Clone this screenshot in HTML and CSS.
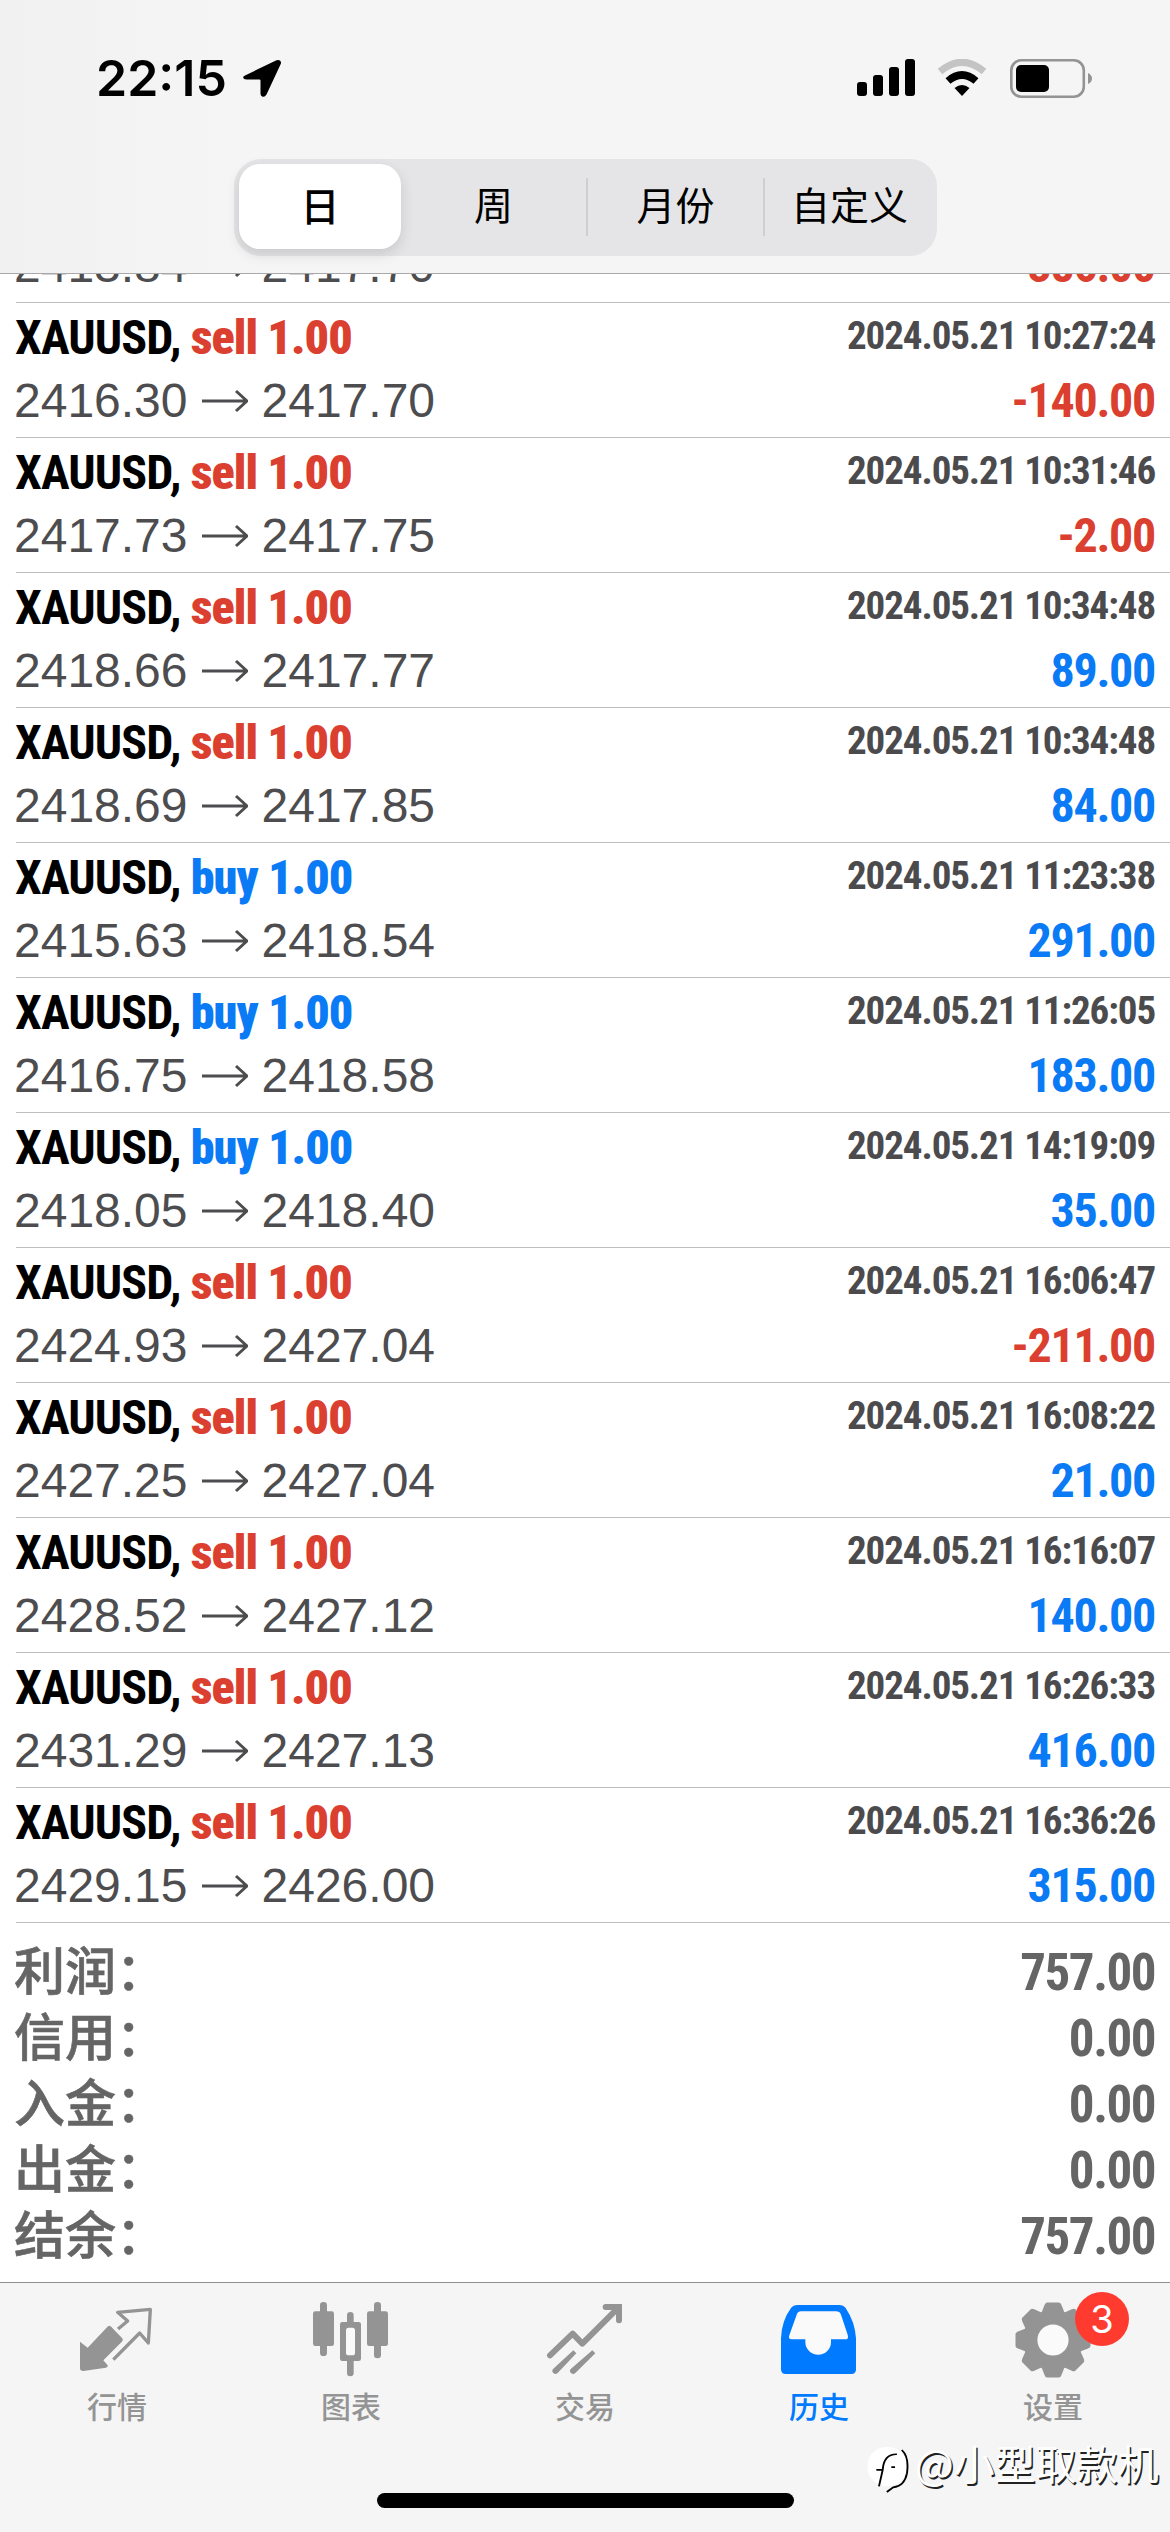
FILE: index.html
```
<!DOCTYPE html>
<html lang="zh-CN">
<head>
<meta charset="utf-8">
<title>历史</title>
<link rel="stylesheet" href="styles.css">
</head>
<body>
<div class="screen">
  <header class="header">
    <div class="status">
      <div class="status-left">
        <span class="clock">22:15</span>
        <svg class="location" width="40" height="40" viewBox="0 0 40 40"><path d="M3.5 17.2 34.5 2.3Q38.6.8 39.1 4.6 39 5.400 38.500 6.500L24.500 36.500Q22.800 39.600 20.200 38.600 18.500 37.800 18.500 35.500V22.600Q18.500 21.500 17.400 21.500H4.500Q1.400 21.300 1.100 19.500 1 18.200 3.500 17.200Z"/></svg>
      </div>
      <div class="status-right">
        <svg width="58" height="38" viewBox="0 0 58 38"><rect y="23" width="10" height="14" rx="3"/><rect x="16" y="16" width="10" height="21" rx="3"/><rect x="32" y="8" width="10" height="29" rx="3"/><rect x="48" width="10" height="37" rx="3"/></svg>
        <svg class="wifi" width="50" height="38" viewBox="0 0 50 38"><path d="M3 12.500Q25-6 47 12.500" fill="none" stroke="#c4c4c5" stroke-width="7"/><path d="M11 22Q25 10 39 22" fill="none" stroke="#000" stroke-width="7.500"/><path d="M17.500 29Q25 23 32.500 29L25 37Z"/></svg>
        <svg class="battery" width="82" height="39" viewBox="0 0 82 39"><rect x="1.300" y="1.300" width="72.500" height="36.400" rx="10" fill="none" stroke="#949495" stroke-width="2.600"/><path d="M78 14Q82 16 82 19.500T78 25Z" fill="#949495"/><rect x="6" y="6" width="33" height="27" rx="5"/></svg>
      </div>
    </div>
    <nav class="segments">
      <span class="segment selected">日</span>
      <span class="segment">周</span>
      <span class="segment divided">月份</span>
      <span class="segment divided">自定义</span>
    </nav>
  </header>

  <main class="history">
    <section class="deal clipped">
      <div class="line"><span class="symbol">XAUUSD, <b class="sell">sell 1.00</b></span><span class="time">2024.05.21 10:27:24</span></div>
      <div class="line"><span class="prices">2413.84<svg class="arrow" viewBox="0 0 46 24"><path d="M0 12H45M34 2 45 12 34 22"/></svg>2417.70</span><span class="amount loss">-386.00</span></div>
    </section>
    <section class="deal">
      <div class="line"><span class="symbol">XAUUSD, <b class="sell">sell 1.00</b></span><span class="time">2024.05.21 10:27:24</span></div>
      <div class="line"><span class="prices">2416.30<svg class="arrow" viewBox="0 0 46 24"><path d="M0 12H45M34 2 45 12 34 22"/></svg>2417.70</span><span class="amount loss">-140.00</span></div>
    </section>
    <section class="deal">
      <div class="line"><span class="symbol">XAUUSD, <b class="sell">sell 1.00</b></span><span class="time">2024.05.21 10:31:46</span></div>
      <div class="line"><span class="prices">2417.73<svg class="arrow" viewBox="0 0 46 24"><path d="M0 12H45M34 2 45 12 34 22"/></svg>2417.75</span><span class="amount loss">-2.00</span></div>
    </section>
    <section class="deal">
      <div class="line"><span class="symbol">XAUUSD, <b class="sell">sell 1.00</b></span><span class="time">2024.05.21 10:34:48</span></div>
      <div class="line"><span class="prices">2418.66<svg class="arrow" viewBox="0 0 46 24"><path d="M0 12H45M34 2 45 12 34 22"/></svg>2417.77</span><span class="amount">89.00</span></div>
    </section>
    <section class="deal">
      <div class="line"><span class="symbol">XAUUSD, <b class="sell">sell 1.00</b></span><span class="time">2024.05.21 10:34:48</span></div>
      <div class="line"><span class="prices">2418.69<svg class="arrow" viewBox="0 0 46 24"><path d="M0 12H45M34 2 45 12 34 22"/></svg>2417.85</span><span class="amount">84.00</span></div>
    </section>
    <section class="deal">
      <div class="line"><span class="symbol">XAUUSD, <b class="buy">buy 1.00</b></span><span class="time">2024.05.21 11:23:38</span></div>
      <div class="line"><span class="prices">2415.63<svg class="arrow" viewBox="0 0 46 24"><path d="M0 12H45M34 2 45 12 34 22"/></svg>2418.54</span><span class="amount">291.00</span></div>
    </section>
    <section class="deal">
      <div class="line"><span class="symbol">XAUUSD, <b class="buy">buy 1.00</b></span><span class="time">2024.05.21 11:26:05</span></div>
      <div class="line"><span class="prices">2416.75<svg class="arrow" viewBox="0 0 46 24"><path d="M0 12H45M34 2 45 12 34 22"/></svg>2418.58</span><span class="amount">183.00</span></div>
    </section>
    <section class="deal">
      <div class="line"><span class="symbol">XAUUSD, <b class="buy">buy 1.00</b></span><span class="time">2024.05.21 14:19:09</span></div>
      <div class="line"><span class="prices">2418.05<svg class="arrow" viewBox="0 0 46 24"><path d="M0 12H45M34 2 45 12 34 22"/></svg>2418.40</span><span class="amount">35.00</span></div>
    </section>
    <section class="deal">
      <div class="line"><span class="symbol">XAUUSD, <b class="sell">sell 1.00</b></span><span class="time">2024.05.21 16:06:47</span></div>
      <div class="line"><span class="prices">2424.93<svg class="arrow" viewBox="0 0 46 24"><path d="M0 12H45M34 2 45 12 34 22"/></svg>2427.04</span><span class="amount loss">-211.00</span></div>
    </section>
    <section class="deal">
      <div class="line"><span class="symbol">XAUUSD, <b class="sell">sell 1.00</b></span><span class="time">2024.05.21 16:08:22</span></div>
      <div class="line"><span class="prices">2427.25<svg class="arrow" viewBox="0 0 46 24"><path d="M0 12H45M34 2 45 12 34 22"/></svg>2427.04</span><span class="amount">21.00</span></div>
    </section>
    <section class="deal">
      <div class="line"><span class="symbol">XAUUSD, <b class="sell">sell 1.00</b></span><span class="time">2024.05.21 16:16:07</span></div>
      <div class="line"><span class="prices">2428.52<svg class="arrow" viewBox="0 0 46 24"><path d="M0 12H45M34 2 45 12 34 22"/></svg>2427.12</span><span class="amount">140.00</span></div>
    </section>
    <section class="deal">
      <div class="line"><span class="symbol">XAUUSD, <b class="sell">sell 1.00</b></span><span class="time">2024.05.21 16:26:33</span></div>
      <div class="line"><span class="prices">2431.29<svg class="arrow" viewBox="0 0 46 24"><path d="M0 12H45M34 2 45 12 34 22"/></svg>2427.13</span><span class="amount">416.00</span></div>
    </section>
    <section class="deal">
      <div class="line"><span class="symbol">XAUUSD, <b class="sell">sell 1.00</b></span><span class="time">2024.05.21 16:36:26</span></div>
      <div class="line"><span class="prices">2429.15<svg class="arrow" viewBox="0 0 46 24"><path d="M0 12H45M34 2 45 12 34 22"/></svg>2426.00</span><span class="amount">315.00</span></div>
    </section>
    <dl class="summary">
      <div class="total"><dt>利润：</dt><dd>757.00</dd></div>
      <div class="total"><dt>信用：</dt><dd>0.00</dd></div>
      <div class="total"><dt>入金：</dt><dd>0.00</dd></div>
      <div class="total"><dt>出金：</dt><dd>0.00</dd></div>
      <div class="total"><dt>结余：</dt><dd>757.00</dd></div>
    </dl>
  </main>

  <footer class="footer">
    <nav class="tabs">
      <span class="tab">
        <svg class="icon" viewBox="54 36 234 234"><path d="M60 155 83 173 144 109Q148 105 152 109L186 144Q191 149 187 154L130 211 143 226Q145 231 138 233L70 243Q60 243 60 235Z"/><path d="M174 117 203 93 173 67 271 58 265 159 239 129 160 209" fill="none" stroke="currentColor" stroke-width="10" stroke-linejoin="round"/></svg>
        行情
      </span>
      <span class="tab">
        <svg class="icon" viewBox="756 36 234 234"><rect x="759" y="64" width="63" height="104" rx="7"/><rect x="780" y="36" width="21" height="162" rx="10"/><rect x="921" y="64" width="63" height="104" rx="7"/><rect x="942" y="36" width="21" height="169" rx="10"/><path d="M861 96V76Q861 66 871 66T881 76V96H896Q903 96 903 103V206Q903 213 896 213H881V249Q881 259 871 259T861 249V213H847Q840 213 840 206V103Q840 96 847 96Z"/><rect x="858" y="113" width="27" height="83" rx="8" fill="#fafafa"/></svg>
        图表
      </span>
      <span class="tab">
        <svg class="icon" viewBox="48 36 234 234"><g fill="none" stroke="currentColor" stroke-width="18" stroke-linecap="round" stroke-linejoin="round"><path d="M60 196 128 131 157 161 266 52"/><path d="M227 51H267V91"/></g><path d="M130 181 139 190 83 249A9 9 0 0 1 70 236ZM187 181 196 190 136 249A9 9 0 0 1 123 236Z"/><path d="M260 42H276V60Z"/></svg>
        交易
      </span>
      <span class="tab active">
        <svg class="icon" viewBox="750 36 234 234"><path d="M753 145Q755 92 783 54 790 45 802 45H928Q940 45 947 54 975 96 978 145V238Q978 252 964 252H767Q753 252 753 238Z"/><path d="M813 64H918Q929 64 933 74L953 134Q957 148 946 148H903V156A38 38 0 0 1 826 156V148H785Q774 148 778 136L800 74Q804 64 813 64Z" fill="#fafafa"/></svg>
        历史
      </span>
      <span class="tab">
        <svg class="icon" viewBox="-39 -38 78 78"><circle r="30"/><g id="teeth"><path id="tooth" d="M-6-37.500H6Q7.500-37.500 8.500-35L12-26H-12L-8.500-35Q-7.500-37.500-6-37.500Z"/><use href="#tooth" transform="rotate(45)"/><use href="#tooth" transform="rotate(90)"/><use href="#tooth" transform="rotate(135)"/></g><use href="#teeth" transform="rotate(180)"/><circle r="15.600" fill="#fafafa"/></svg>
        设置
        <span class="badge">3</span>
      </span>
    </nav>
    <div class="home-indicator"></div>
    <div class="watermark">
      <svg width="43" height="48" viewBox="755 525 115 145" preserveAspectRatio="none"><rect x="757" y="531" width="104" height="118" rx="52" fill="#fff"/><path d="M780 600H797M787 650 797 600Q800 552 835 553M820 592H830M848 540Q868 560 862 610 855 650 825 653L808 667" fill="none" stroke="#000" stroke-width="5"/></svg>
      <span>@小型取款机</span>
    </div>
  </footer>
</div>
</body>
</html>
```
FILE: styles.css
```
* { box-sizing: border-box; margin: 0; }

body {
  background: #fff;
  font-family: "Liberation Sans", "Noto Sans CJK SC", sans-serif;
}

.screen {
  width: 1170px;
  height: 2532px;
  display: flex;
  flex-direction: column;
  overflow: hidden;
}

.header {
  flex: none;
  height: 274px;
  padding-top: 52px;
  background: linear-gradient(90deg, #f2f1f1, #f5f5f5 20%);
  border-bottom: 1px solid #a9a9ab;
}

.status {
  height: 52px;
  display: flex;
  justify-content: space-between;
  align-items: center;
  padding: 0 78px 0 96px;
}
.status-left, .status-right { display: flex; align-items: center; }
.clock { font: 600 50px/52px Inter, sans-serif; }
.location { margin-left: 15px; }
.wifi { margin-left: 22px; }
.battery { margin-left: 23px; }

.segments {
  width: 703px;
  height: 97px;
  margin: 55px 0 0 234px;
  padding: 5px 3px 7px 5px;
  display: grid;
  grid-template-columns: 162px 185px 177px 1fr;
  align-items: center;
  background: #e5e5e7;
  border-radius: 27px;
}
.segment {
  line-height: 58px;
  font-size: 39px;
  text-align: center;
}
.selected {
  height: 85px;
  line-height: 87px;
  font-weight: 500;
  background: #fff;
  border-radius: 21px;
  box-shadow: 0 5px 14px rgba(0, 0, 0, .13);
}
.divided { border-left: 2px solid #cfcfd2; }

.history { flex: 1; min-height: 0; overflow: hidden; }

.deal {
  height: 135px;
  margin-left: 16px;
  padding: 3px 15px 0 0;
  border-bottom: 1px solid #bebec0;
}
.clipped { margin-top: -106px; }
.line {
  height: 63px;
  line-height: 63px;
  display: flex;
  justify-content: space-between;
  align-items: baseline;
}
.symbol, .time, .amount, .total dd {
  font-family: "Roboto Condensed", Roboto, sans-serif;
  font-stretch: condensed;
  font-weight: 700;
}
.symbol { margin-left: -1px; font-size: 48px; letter-spacing: -0.9px; color: #000; }
.sell { color: #db3f30; }
.buy { color: #0a7af5; }
.time { align-self: flex-start; line-height: 60px; font-size: 39px; letter-spacing: -1.1px; color: #4b4b4e; }
.prices { margin-left: -2px; font-size: 48px; color: #4d4d50; display: flex; align-items: baseline; }
.arrow {
  width: 46px;
  height: 24px;
  margin: 0 14px;
  align-self: center;
  fill: none;
  stroke: currentColor;
  stroke-width: 3;
}
.amount { font-size: 48px; letter-spacing: -1.3px; color: #0a7af5; }
.loss { color: #db3f30; }

.summary { padding: 12px 15px 0 14px; color: #656566; }
.total {
  height: 66px;
  line-height: 66px;
  display: flex;
  justify-content: space-between;
  align-items: baseline;
}
.total dt {
  font: 500 51px/66px "Noto Sans CJK SC", sans-serif;
  -webkit-text-stroke: 0.6px currentColor;
}
.total dd { font-size: 51px; letter-spacing: -1.5px; }

.footer {
  flex: none;
  position: relative;
  height: 250px;
  background: #f5f5f5;
  border-top: 1px solid #8e8e90;
}
.tabs { display: grid; grid-template-columns: repeat(5, 1fr); padding-top: 19px; }
.tab {
  position: relative;
  display: flex;
  flex-direction: column;
  align-items: center;
  color: #949494;
  font-size: 30px;
  font-weight: 500;
  line-height: 44px;
}
.active { color: #007aff; }
.icon { width: 78px; height: 78px; margin-bottom: 6px; fill: currentColor; }
.badge {
  position: absolute;
  left: 139px;
  top: -10px;
  width: 54px;
  height: 54px;
  border-radius: 50%;
  background: #ff3b30;
  color: #fff;
  font: 38px/54px Inter, sans-serif;
  text-align: center;
}
.home-indicator {
  width: 417px;
  height: 15px;
  margin: 63px auto 0;
  border-radius: 8px;
  background: #000;
}
.watermark {
  position: absolute;
  left: 867px;
  top: 162px;
  display: flex;
  align-items: flex-start;
  gap: 5px;
  color: #fff;
  font: 41px/48px "Noto Sans CJK SC", sans-serif;
  text-shadow: 1.500px 1.500px 0 #222;
  white-space: nowrap;
}
.watermark span { line-height: 34px; }
```
